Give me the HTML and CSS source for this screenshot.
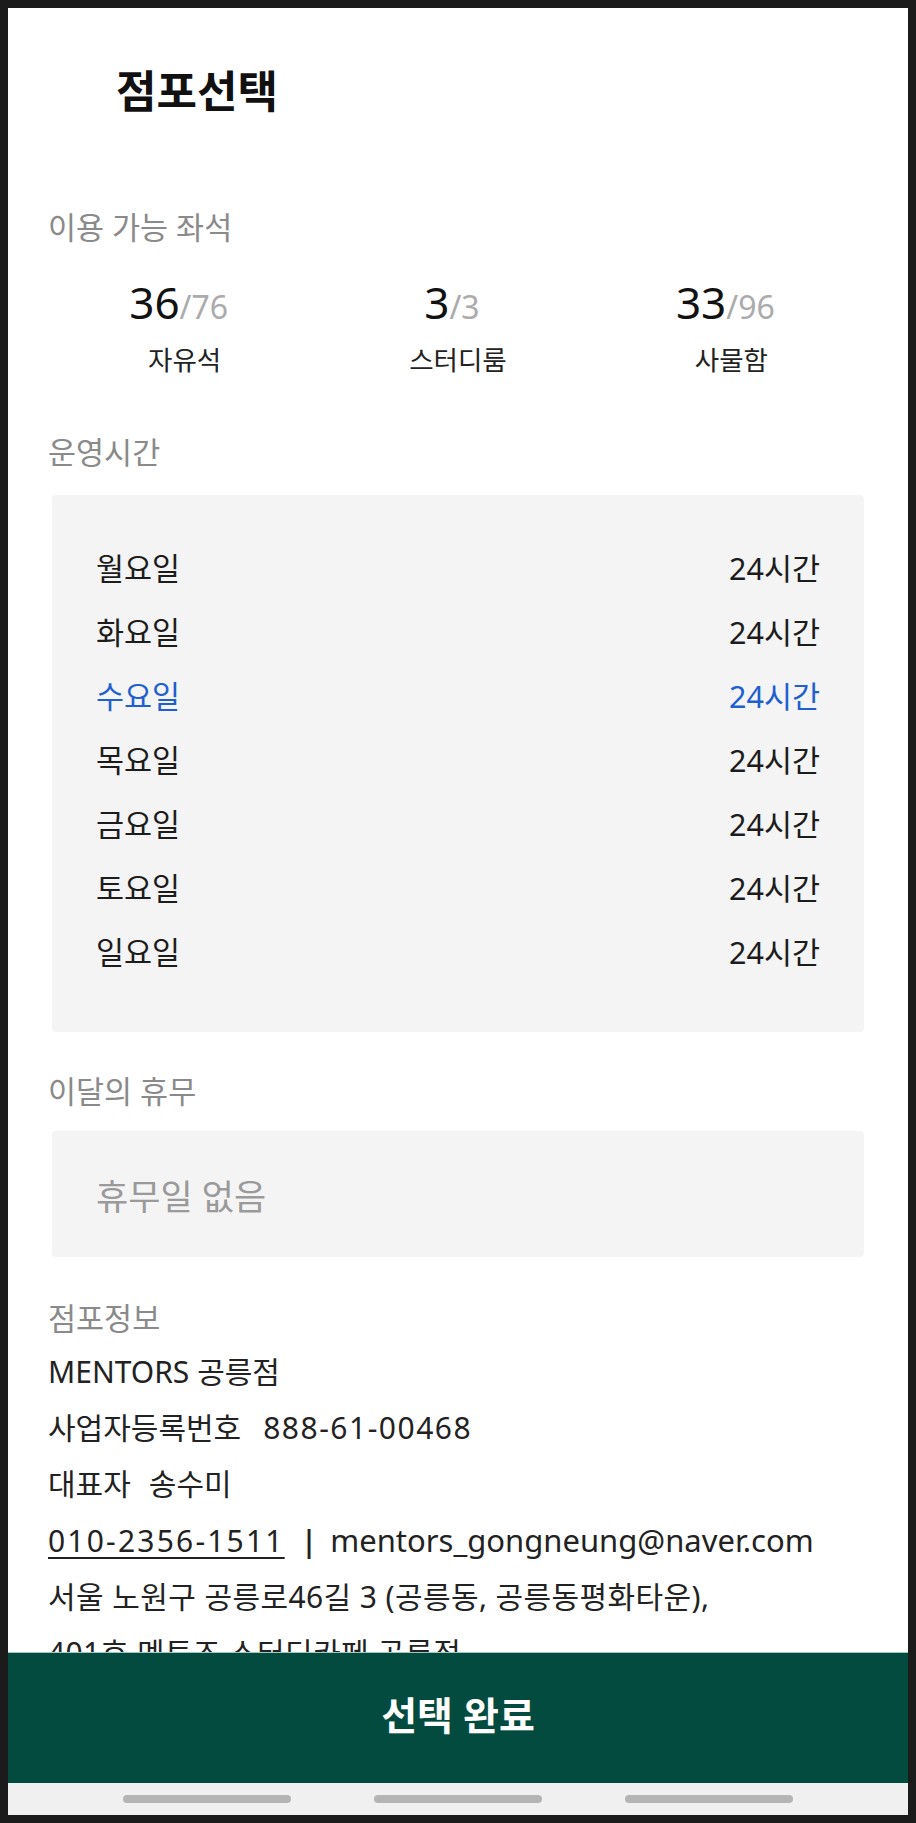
FILE: index.html
```html
<!DOCTYPE html>
<html lang="ko">
<head>
<meta charset="utf-8">
<title>점포선택</title>
<link rel="stylesheet" href="styles.css">
</head>
<body>
<div class="screen">
  <main class="content">
    <h1 class="title">점포선택</h1>

    <h2 class="section-label seats-label">이용 가능 좌석</h2>
    <div class="stats">
      <div class="stat">
        <div class="stat-num"><span class="cur">36</span><span class="tot">/76</span></div>
        <div class="stat-name">자유석</div>
      </div>
      <div class="stat">
        <div class="stat-num"><span class="cur">3</span><span class="tot">/3</span></div>
        <div class="stat-name">스터디룸</div>
      </div>
      <div class="stat">
        <div class="stat-num"><span class="cur">33</span><span class="tot">/96</span></div>
        <div class="stat-name">사물함</div>
      </div>
    </div>

    <h2 class="section-label hours-label">운영시간</h2>
    <div class="hours-box">
      <div class="day-row"><span>월요일</span><span>24시간</span></div>
      <div class="day-row"><span>화요일</span><span>24시간</span></div>
      <div class="day-row today"><span>수요일</span><span>24시간</span></div>
      <div class="day-row"><span>목요일</span><span>24시간</span></div>
      <div class="day-row"><span>금요일</span><span>24시간</span></div>
      <div class="day-row"><span>토요일</span><span>24시간</span></div>
      <div class="day-row"><span>일요일</span><span>24시간</span></div>
    </div>

    <h2 class="section-label holiday-label">이달의 휴무</h2>
    <div class="holiday-box">휴무일 없음</div>

    <h2 class="section-label info-label">점포정보</h2>
    <div class="info">
      <p class="info-line">MENTORS 공릉점</p>
      <p class="info-line">사업자등록번호<span class="sp"></span><span class="num">888-61-00468</span></p>
      <p class="info-line">대표자<span class="sp sp-short"></span>송수미</p>
      <p class="info-line"><span class="phone">010-2356-1511</span><span class="bar">|</span><span class="email">mentors_gongneung@naver.com</span></p>
      <p class="info-line address">서울 노원구 공릉로46길 3 (공릉동, 공릉동평화타운),</p>
      <p class="info-line address">401호 멘토즈 스터디카페 공릉점</p>
    </div>
  </main>

  <button class="confirm">선택 완료</button>

  <nav class="navbar">
    <span class="pill"></span>
    <span class="pill"></span>
    <span class="pill"></span>
  </nav>
</div>
</body>
</html>
```

FILE: styles.css
```css
* {
  box-sizing: border-box;
}

html, body {
  margin: 0;
  padding: 0;
}

body {
  background: #1b1b1b;
  font-family: "Noto Sans", "Noto Sans CJK KR", sans-serif;
  color: #1c1c1c;
}

.screen {
  margin: 8px;
  height: 1807px;
  background: #ffffff;
  display: flex;
  flex-direction: column;
  overflow: hidden;
}

.content {
  flex: 1;
  min-height: 0;
  overflow: hidden;
  padding: 0 40px;
}

.title {
  margin: 59px 0 0 68px;
  font-size: 44px;
  line-height: 48px;
  font-weight: 700;
  color: #111;
}

.section-label {
  margin: 0;
  font-size: 30.5px;
  line-height: 36px;
  font-weight: 400;
  color: #8a8a8a;
}

.seats-label {
  margin-top: 94px;
}

.stats {
  display: grid;
  grid-template-columns: repeat(3, 1fr);
  margin-top: 31px;
}

.stat {
  display: flex;
  flex-direction: column;
  align-items: center;
}

.stat-num {
  line-height: 52px;
  height: 52px;
  white-space: nowrap;
  margin-right: 12px;
}

.cur {
  font-size: 44px;
  color: #111;
}

.tot {
  font-size: 32px;
  color: #ababab;
}

.stat-name {
  margin-top: 15px;
  font-size: 26.5px;
  line-height: 34px;
  color: #222;
}

.hours-label {
  margin-top: 57px;
}

.hours-box {
  margin: 25px 4px 0;
  padding: 41px 44px 48px;
  background: #f4f4f4;
  border-radius: 4px;
}

.day-row {
  display: flex;
  justify-content: space-between;
  height: 64px;
  line-height: 64px;
  font-size: 30.5px;
  color: #1c1c1c;
}

.day-row.today {
  color: #1f5fcf;
}

.holiday-label {
  margin-top: 41px;
}

.holiday-box {
  margin: 22px 4px 0;
  height: 126px;
  padding: 0 44px;
  display: flex;
  align-items: center;
  background: #f4f4f4;
  border-radius: 4px;
  font-size: 35px;
  color: #9a9a9a;
}

.info-label {
  margin-top: 43px;
}

.info {
  margin-top: 8px;
}

.info-line {
  margin: 0;
  font-size: 30px;
  line-height: 56px;
  color: #222;
  white-space: nowrap;
}

.address {
  letter-spacing: 0.4px;
}

.sp {
  display: inline-block;
  width: 22px;
}

.sp-short {
  width: 18px;
}

.num {
  letter-spacing: 1.5px;
}

.phone {
  text-decoration: underline;
  text-decoration-thickness: 2px;
  text-underline-offset: 5px;
  letter-spacing: 2.2px;
}

.bar {
  display: inline-block;
  margin: 0 13px 0 16px;
  font-weight: 600;
}

.email {
  font-size: 31px;
}

.confirm {
  flex: none;
  height: 131px;
  border: 0;
  border-top: 1px solid #9fc9c0;
  margin: 0;
  padding: 0 0 10px;
  background: #034b3f;
  color: #ffffff;
  font-family: "Noto Sans", "Noto Sans CJK KR", sans-serif;
  font-size: 39px;
  font-weight: 700;
}

.navbar {
  flex: none;
  height: 32px;
  background: #f0f0f0;
  display: flex;
  justify-content: center;
  align-items: center;
  gap: 83px;
}

.pill {
  width: 168px;
  height: 8px;
  border-radius: 4px;
  background: #b4b4b4;
}
```
